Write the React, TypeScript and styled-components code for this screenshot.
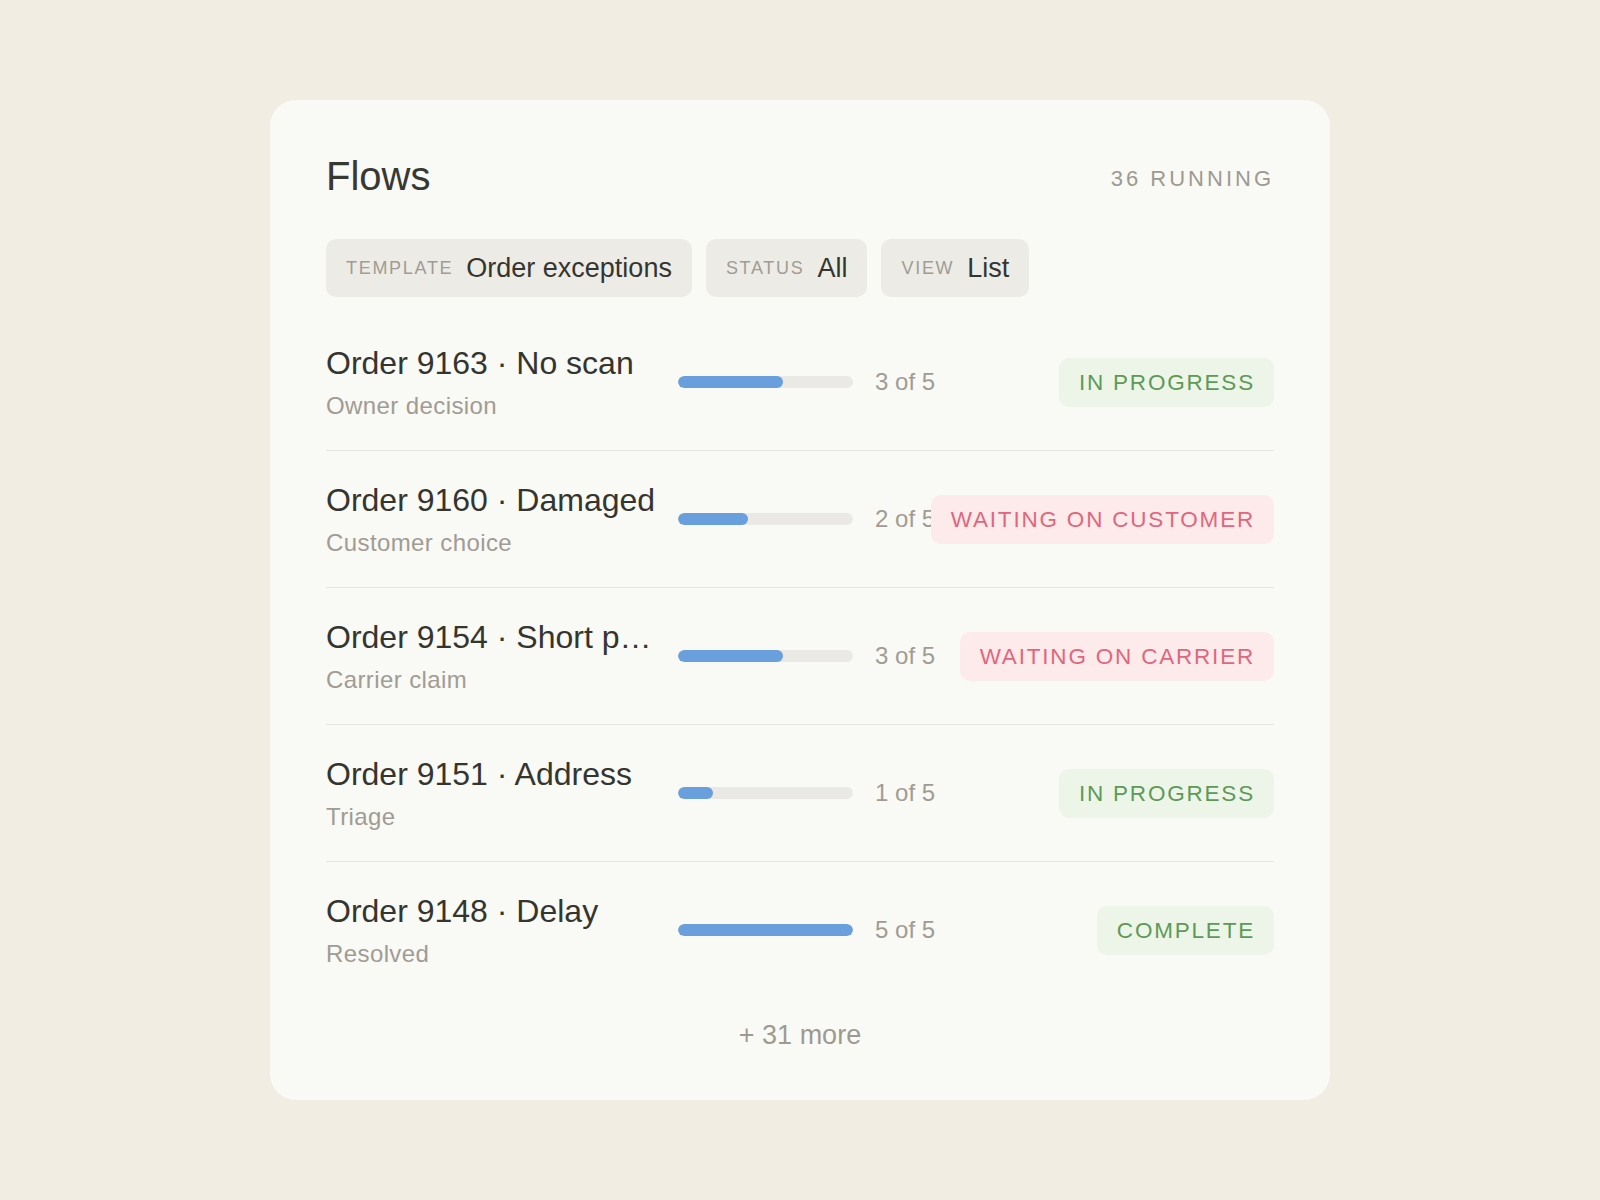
import React from 'react';
import styled, { createGlobalStyle } from 'styled-components';

type Tone = 'green' | 'red';

interface Flow {
  id: number;
  title: string;
  stage: string;
  step: number;
  status: string;
  tone: Tone;
}

const TOTAL_STEPS = 5;

const flows: Flow[] = [
  { id: 9163, title: 'No scan', stage: 'Owner decision', step: 3, status: 'In progress', tone: 'green' },
  { id: 9160, title: 'Damaged', stage: 'Customer choice', step: 2, status: 'Waiting on customer', tone: 'red' },
  { id: 9154, title: 'Short pick', stage: 'Carrier claim', step: 3, status: 'Waiting on carrier', tone: 'red' },
  { id: 9151, title: 'Address', stage: 'Triage', step: 1, status: 'In progress', tone: 'green' },
  { id: 9148, title: 'Delay', stage: 'Resolved', step: 5, status: 'Complete', tone: 'green' },
];

const filters = [
  { label: 'Template', value: 'Order exceptions' },
  { label: 'Status', value: 'All' },
  { label: 'View', value: 'List' },
];

const tones = {
  green: { fg: '#5e9a57', bg: '#ecf5e8' },
  red: { fg: '#e0677d', bg: '#fdeaea' },
};

const GlobalStyle = createGlobalStyle`
  html, body {
    margin: 0;
    padding: 0;
    background: #f2ede2;
    font-family: "Liberation Sans", Arial, sans-serif;
    color: #35352f;
  }
`;

const Page = styled.main`
  display: flex;
  align-items: center;
  justify-content: center;
  min-height: 100vh;
`;

const Card = styled.section`
  box-sizing: border-box;
  width: 1060px;
  padding: 56px 56px 49px;
  border-radius: 26px;
  background: #f9f9f5;
`;

const Header = styled.header`
  display: flex;
  align-items: flex-start;
  justify-content: space-between;
`;

const Title = styled.h1`
  margin: 0;
  font-size: 40px;
  line-height: 40px;
  font-weight: 400;
  color: #383833;
`;

const Running = styled.span`
  margin-top: 11px;
  font-size: 22px;
  line-height: 24px;
  letter-spacing: 3px;
  text-transform: uppercase;
  color: #9e9a92;
`;

const FilterBar = styled.div`
  display: flex;
  gap: 14px;
  margin-top: 43px;
`;

const FilterPill = styled.button`
  display: flex;
  align-items: center;
  gap: 13px;
  height: 58px;
  padding: 0 20px;
  border: 0;
  border-radius: 10px;
  background: #edebe6;
  font-family: inherit;
  cursor: pointer;
`;

const FilterLabel = styled.span`
  font-size: 18px;
  letter-spacing: 1.7px;
  text-transform: uppercase;
  color: #a09c94;
`;

const FilterValue = styled.span`
  font-size: 27px;
  color: #35352f;
`;

const List = styled.ul`
  list-style: none;
  margin: 17px 0 0;
  padding: 0;
`;

const Row = styled.li`
  display: flex;
  align-items: center;
  height: 136px;
  border-bottom: 1px solid #e6e4df;

  &:last-child {
    border-bottom: 0;
  }
`;

const Info = styled.div`
  flex: 0 0 330px;
  min-width: 0;
  margin-right: 22px;
`;

const RowTitle = styled.div`
  font-size: 32px;
  line-height: 40px;
  white-space: nowrap;
  overflow: hidden;
  text-overflow: ellipsis;
  color: #35352f;
`;

const RowStage = styled.div`
  margin-top: 7px;
  font-size: 24px;
  line-height: 32px;
  letter-spacing: 0.4px;
  color: #a09c94;
`;

const Track = styled.div`
  flex: 0 0 175px;
  height: 12px;
  margin-right: 22px;
  border-radius: 6px;
  background: #ebe9e5;
  overflow: hidden;
`;

const Fill = styled.div`
  height: 100%;
  border-radius: 6px;
  background: #6a9fdd;
`;

const Steps = styled.span`
  flex: 0 0 auto;
  font-size: 24px;
  white-space: nowrap;
  color: #a09c94;
`;

const BadgeSlot = styled.div`
  flex: 1 1 0;
  min-width: 0;
  display: flex;
  justify-content: flex-end;
`;

const Badge = styled.span<{ $tone: Tone }>`
  flex-shrink: 0;
  height: 49px;
  line-height: 49px;
  padding: 0 19px 0 20px;
  border-radius: 10px;
  font-size: 22.5px;
  letter-spacing: 1.8px;
  text-transform: uppercase;
  white-space: nowrap;
  color: ${({ $tone }) => tones[$tone].fg};
  background: ${({ $tone }) => tones[$tone].bg};
`;

const More = styled.div`
  padding-top: 21px;
  text-align: center;
  font-size: 27px;
  line-height: 32px;
  color: #9e9a92;
`;

export default function App() {
  return (
    <>
      <GlobalStyle />
      <Page>
        <Card>
          <Header>
            <Title>Flows</Title>
            <Running>36 running</Running>
          </Header>

          <FilterBar>
            {filters.map((f) => (
              <FilterPill key={f.label}>
                <FilterLabel>{f.label}</FilterLabel>
                <FilterValue>{f.value}</FilterValue>
              </FilterPill>
            ))}
          </FilterBar>

          <List>
            {flows.map((flow) => (
              <Row key={flow.id}>
                <Info>
                  <RowTitle>Order {flow.id} · {flow.title}</RowTitle>
                  <RowStage>{flow.stage}</RowStage>
                </Info>
                <Track>
                  <Fill style={{ width: `${(flow.step / TOTAL_STEPS) * 100}%` }} />
                </Track>
                <Steps>{flow.step} of {TOTAL_STEPS}</Steps>
                <BadgeSlot>
                  <Badge $tone={flow.tone}>{flow.status}</Badge>
                </BadgeSlot>
              </Row>
            ))}
          </List>

          <More>+ 31 more</More>
        </Card>
      </Page>
    </>
  );
}
